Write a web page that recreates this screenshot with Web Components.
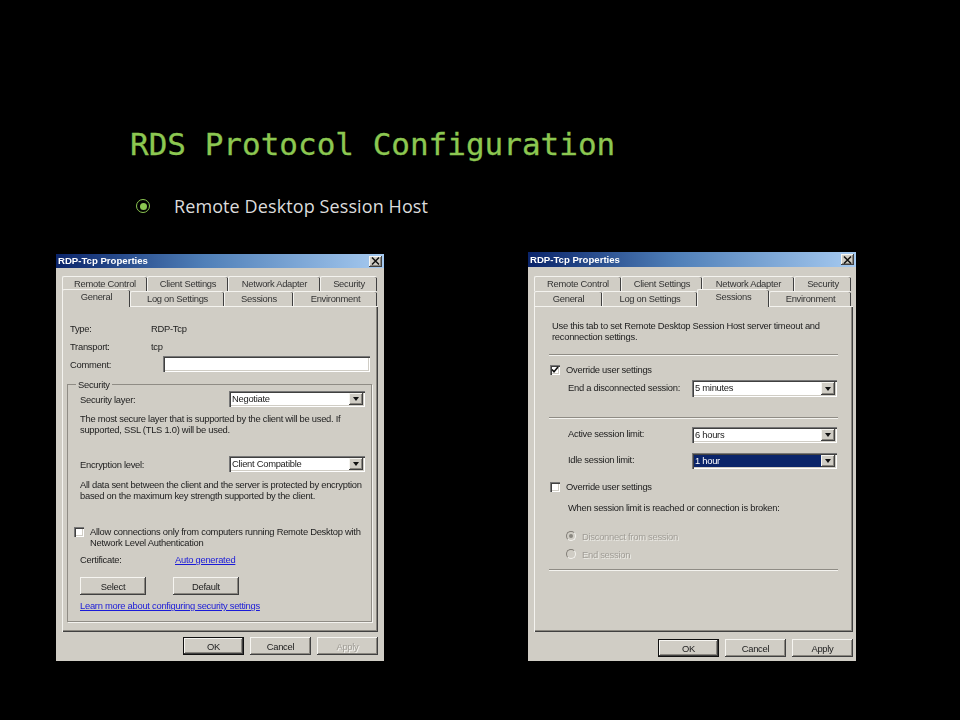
<!DOCTYPE html>
<html>
<head>
<meta charset="utf-8">
<title>RDS Protocol Configuration</title>
<style>
    html, body { margin: 0; background: #000; height: 720px; overflow: hidden; }
</style>
</head>
<body>
<slide-page>
    <slide-title slot="title">RDS Protocol Configuration</slide-title>
    <slide-bullet slot="bullet">Remote Desktop Session Host</slide-bullet>
    <rdp-dialog slot="dialogs" active="General" variant="left"><general-pane></general-pane></rdp-dialog>
    <rdp-dialog slot="dialogs" active="Sessions" variant="right" can-apply><sessions-pane></sessions-pane></rdp-dialog>
</slide-page>

<script>
const define = (name, css, html, setup) => {
    customElements.define(name, class extends HTMLElement {
        connectedCallback() {
            if (this.shadowRoot) return;
            this.attachShadow({ mode: 'open' });
            const markup = typeof html === 'function' ? html(this) : html;
            this.shadowRoot.innerHTML = `<style>${css}</style>${markup}`;
            if (setup) setup(this);
        }
    });
};

const RAISED = 'background: #d0cdc5; box-shadow: inset -1px -1px 0 #404040, inset 1px 1px 0 #f6f5f1, inset -2px -2px 0 #8a8780;';
const SUNKEN = 'box-shadow: inset 1px 1px 0 #777, inset 2px 2px 0 #404040, inset -1px -1px 0 #fff, inset -2px -2px 0 #d0cdc5;';

define('slide-page', `
    :host { display: block; width: 960px; height: 720px; background: #000; }
    .head { height: 252px; box-sizing: border-box; padding: 124px 0 0 130px; }
    .dialogs { display: flex; align-items: flex-end; gap: 144px; padding-left: 56px; height: 409px; }
`, `
    <div class="head"><slot name="title"></slot><slot name="bullet"></slot></div>
    <div class="dialogs"><slot name="dialogs"></slot></div>
`);

define('slide-title', `
    :host { display: block; height: 40px; color: #8cc751; font: 31px/40px "DejaVu Sans Mono", monospace; -webkit-text-stroke: 0.3px #8cc751; }
`, `<slot></slot>`);

define('slide-bullet', `
    :host { display: flex; align-items: center; gap: 24px; height: 26px; margin: 29px 0 0 6px; color: #dcdcdc; font: 18px/26px "Open Sans", sans-serif; letter-spacing: 0.1px; }
    .mark { width: 14px; height: 14px; box-sizing: border-box; border: 1.5px solid #8cc751; border-radius: 50%; display: grid; place-items: center; }
    .mark i { width: 7px; height: 7px; border-radius: 50%; background: #8cc751; }
`, `<span class="mark"><i></i></span><span><slot></slot></span>`);

const TABS = {
    left: {
        back: [['Remote Control', 85], ['Client Settings', 81], ['Network Adapter', 92], ['Security', 57]],
        front: [['General', 68], ['Log on Settings', 94], ['Sessions', 69], ['Environment', 84]],
    },
    right: {
        back: [['Remote Control', 87], ['Client Settings', 81], ['Network Adapter', 92], ['Security', 57]],
        front: [['General', 68], ['Log on Settings', 95], ['Sessions', 72], ['Environment', 82]],
    },
};

define('rdp-dialog', `
    :host { display: flex; flex-direction: column; width: 328px; box-sizing: border-box; background: #d0cdc5; color: #222; font: 9.4px/11px "Liberation Sans", Arial, sans-serif; letter-spacing: -0.27px; white-space: nowrap; filter: blur(0.35px); }
    :host([variant=left]) { height: 407px; padding: 0 6px; --bar: 14px; --tabs-top: 8px; --pane-h: 326px; --foot: 5px; --bar-r: -6px; --bar-lift: -2px; }
    :host([variant=right]) { height: 409px; padding: 0 3px 0 6px; --bar: 15px; --tabs-top: 9px; --pane-h: 326px; --foot: 7px; --bar-r: -3px; --bar-lift: 0px; }
    .bar { display: flex; align-items: center; justify-content: space-between; height: var(--bar); margin: 0 var(--bar-r) 0 -6px; padding: 0 2px; background: linear-gradient(90deg, #0a246a, #4f7fb8 45%, #a6caf0); color: #fff; font-weight: bold; font-size: 9.6px; letter-spacing: 0; }
    .bar span:first-child { margin-top: var(--bar-lift); }
    .x { width: 13px; height: 11px; ${RAISED} display: grid; place-items: center; }
    .tabs { margin-top: var(--tabs-top); }
    .row { display: flex; height: 15px; color: #333; }
    .tab { box-sizing: border-box; text-align: center; line-height: 14px; border-top: 1px solid #f4f3ef; border-left: 1px solid #f4f3ef; box-shadow: inset -1px 0 0 #404040; border-radius: 2px 2px 0 0; }
    .tab.on { height: 18px; margin-top: -2px; position: relative; z-index: 1; background: #d0cdc5; line-height: 14px; }
    .pane { height: var(--pane-h); box-sizing: border-box; background: #d0cdc5; border-top: 1px solid #f4f3ef; border-left: 1px solid #f4f3ef; box-shadow: inset -1px -1px 0 #404040, inset -2px -2px 0 #8a8780; }
    .foot { display: flex; justify-content: flex-end; gap: 6px; padding-top: var(--foot); }
`, el => {
    const set = TABS[el.getAttribute('variant')];
    const active = el.getAttribute('active');
    const row = tabs => `<div class="row">${tabs.map(([label, w]) =>
        `<div class="tab${label === active ? ' on' : ''}" style="width:${w}px">${label}</div>`).join('')}</div>`;
    return `
        <div class="bar"><span>RDP-Tcp Properties</span>
            <span class="x"><svg width="9" height="8" viewBox="0 0 9 8"><path d="M1 0.5l7 7M8 0.5l-7 7" stroke="#111" stroke-width="1.5" fill="none"/></svg></span></div>
        <div class="tabs">${row(set.back)}${row(set.front)}</div>
        <div class="pane"><slot></slot></div>
        <div class="foot">
            <rdp-button default style="width:61px;height:18px">OK</rdp-button>
            <rdp-button style="width:61px;height:18px">Cancel</rdp-button>
            <rdp-button ${el.hasAttribute('can-apply') ? '' : 'disabled'} style="width:61px;height:18px">Apply</rdp-button>
        </div>`;
});

define('rdp-button', `
    :host { display: grid; place-items: center; box-sizing: border-box; ${RAISED} color: #222; }
    :host([default]) { border: 1px solid #111; }
    :host([disabled]) { color: #a09d96; text-shadow: 1px 1px 0 #f4f3ef; }
`, `<slot></slot>`);

define('rdp-select', `
    :host { display: flex; box-sizing: border-box; height: 16px; padding: 2px; background: #fff; ${SUNKEN} color: #222; }
    .value { flex: 1; padding-left: 1px; line-height: 12px; }
    :host([selected]) .value { background: #0a246a; color: #fff; }
    .arrow { width: 14px; ${RAISED} display: grid; place-items: center; }
    .arrow i { border: 3px solid transparent; border-top: 4px solid #111; border-bottom: 0; }
`, `<span class="value"><slot></slot></span><span class="arrow"><i></i></span>`);

define('rdp-check', `
    :host { display: flex; gap: 6px; align-items: flex-start; }
    .box { flex: none; width: 10px; height: 10px; margin-top: 1px; background: #fff; ${SUNKEN} display: grid; place-items: center; }
`, el => `<span class="box">${el.hasAttribute('checked')
    ? '<svg width="8" height="8" viewBox="0 0 8 8"><path d="M1 3.5l2 2.2L7 1" stroke="#111" stroke-width="1.6" fill="none"/></svg>' : ''}</span><span><slot></slot></span>`);

define('rdp-radio', `
    :host { display: flex; gap: 6px; align-items: center; height: 12px; color: #a09d96; text-shadow: 1px 1px 0 #ecebe6; }
    .dot { flex: none; width: 10px; height: 10px; box-sizing: border-box; border-radius: 50%; border: 1px solid; border-color: #807d76 #f4f3ef #f4f3ef #807d76; display: grid; place-items: center; }
    .dot i { width: 4px; height: 4px; border-radius: 50%; background: #8a8780; }
`, el => `<span class="dot">${el.hasAttribute('checked') ? '<i></i>' : ''}</span><span><slot></slot></span>`);

define('rdp-sep', `
    :host { display: block; height: 2px; box-sizing: border-box; border-top: 1px solid #8f8c85; border-bottom: 1px solid #f4f3ef; }
`, ``);

define('general-pane', `
    :host { display: block; padding-top: 12px; }
    a { color: #1a1ad8; text-decoration: underline; }
    .info { display: grid; grid-template-columns: 81px 12px 207px; grid-auto-rows: 18px; align-items: center; margin-left: 7px; }
    .field { grid-column: 3; height: 16px; background: #fff; ${SUNKEN} }
    .comment { grid-column: 1 / 3; }
    .wide { grid-column: 2 / 4; }
    .group { position: relative; box-sizing: border-box; width: 305px; height: 238px; margin: 11px 0 0 4px; padding: 6px 0 0 12px; border: 1px solid #8f8c85; box-shadow: 1px 1px 0 #f4f3ef; }
    .legend { position: absolute; top: -6px; left: 8px; padding: 0 2px; background: #d0cdc5; }
    .line { display: flex; align-items: center; }
    .line span { width: 149px; }
    rdp-select { width: 136px; }
    p { margin: 0; }
    .cert { display: flex; margin-top: 6px; }
    .cert span { width: 95px; }
    .btns { display: flex; gap: 27px; margin-top: 12px; }
    .btns rdp-button { width: 66px; height: 18px; }
`, `
    <div class="info">
        <span>Type:</span><span class="wide">RDP-Tcp</span>
        <span>Transport:</span><span class="wide">tcp</span>
        <span class="comment">Comment:</span><div class="field"></div>
    </div>
    <div class="group">
        <span class="legend">Security</span>
        <div class="line"><span>Security layer:</span><rdp-select>Negotiate</rdp-select></div>
        <p style="margin-top:6px">The most secure layer that is supported by the client will be used. If<br>supported, SSL (TLS 1.0) will be used.</p>
        <div class="line" style="margin-top:21px"><span>Encryption level:</span><rdp-select>Client Compatible</rdp-select></div>
        <p style="margin-top:7px">All data sent between the client and the server is protected by encryption<br>based on the maximum key strength supported by the client.</p>
        <rdp-check style="margin:25px 0 0 -6px">Allow connections only from computers running Remote Desktop with<br>Network Level Authentication</rdp-check>
        <div class="cert"><span>Certificate:</span><a href="#">Auto generated</a></div>
        <div class="btns"><rdp-button>Select</rdp-button><rdp-button>Default</rdp-button></div>
        <p style="margin-top:5px"><a href="#">Learn more about configuring security settings</a></p>
    </div>
`);

define('sessions-pane', `
    :host { display: block; padding: 13px 0 0 17px; }
    p { margin: 0; }
    rdp-sep { width: 289px; margin-left: -3px; }
    .line { display: flex; align-items: center; margin-left: 16px; }
    .line span { width: 124px; margin-bottom: 3px; }
    rdp-select { width: 145px; height: 17px; }
    rdp-check { margin-left: -2px; height: 12px; line-height: 12px; }
    rdp-radio { margin-left: 14px; }
`, `
    <p>Use this tab to set Remote Desktop Session Host server timeout and<br>reconnection settings.</p>
    <rdp-sep style="margin-top:12px"></rdp-sep>
    <rdp-check checked style="margin-top:8px">Override user settings</rdp-check>
    <div class="line" style="margin-top:4px"><span>End a disconnected session:</span><rdp-select>5 minutes</rdp-select></div>
    <rdp-sep style="margin-top:20px"></rdp-sep>
    <div class="line" style="margin-top:8px"><span>Active session limit:</span><rdp-select style="height:16px">6 hours</rdp-select></div>
    <div class="line" style="margin-top:10px"><span>Idle session limit:</span><rdp-select selected style="height:16px">1 hour</rdp-select></div>
    <rdp-check style="margin-top:12px">Override user settings</rdp-check>
    <p style="margin:9px 0 0 16px">When session limit is reached or connection is broken:</p>
    <rdp-radio checked style="margin-top:17px">Disconnect from session</rdp-radio>
    <rdp-radio style="margin-top:6px">End session</rdp-radio>
    <rdp-sep style="margin-top:9px"></rdp-sep>
`);
</script>
</body>
</html>
